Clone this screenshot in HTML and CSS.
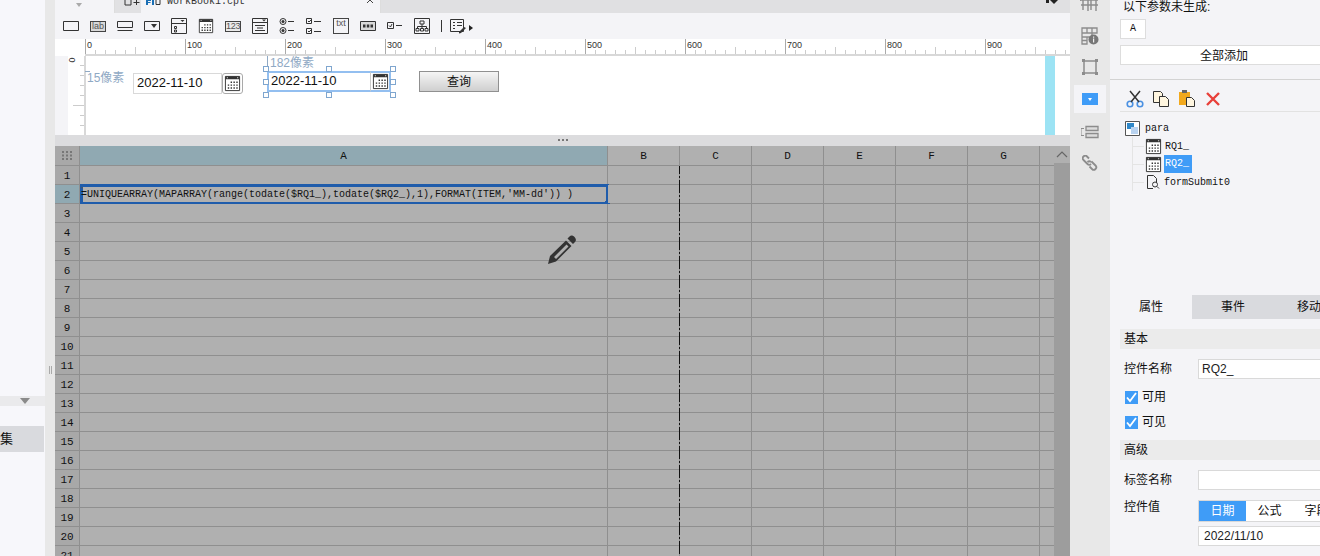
FILE: index.html
```html
<!DOCTYPE html>
<html lang="zh">
<head>
<meta charset="utf-8">
<title>Designer</title>
<link rel="stylesheet" href="styles.css">
</head>
<body>
<div class="app">
  <aside class="left">
    <div class="left-space"></div>
    <div class="left-bar"><span class="left-arrow"></span></div>
    <div class="left-gap"></div>
    <div class="left-item">集</div>
  </aside>
  <div class="divider"><span class="grip"></span></div>
  <main class="center">
    <div class="tabs">
      <div class="tab-lead"><span class="tab-drop"></span></div>
      <div class="tab-add">
        <svg width="16" height="13" viewBox="0 0 16 13"><path d="M1 0v5h6V0M9.500 2.500h6M12.500 0v5" fill="none" stroke="#333"/></svg>
      </div>
      <div class="tab-active">
        <svg width="15" height="13" viewBox="0 0 15 13"><path d="M0 0h5v1H2v1h2.500v1H2v2H0zM6 0h2v5H6z" fill="#1a6fb5"/><path d="M10 0v4.500h4V0" fill="none" stroke="#333"/></svg>
        <span class="tab-name">WorkBook1.cpt</span>
        <svg class="tab-close" width="8" height="4" viewBox="0 0 8 4"><path d="M1 3l3-3 3 3" fill="none" stroke="#444"/></svg>
      </div>
      <div class="tab-rest"><svg class="tab-corner" width="12" height="4" viewBox="0 0 12 4"><path d="M0 0h3v3H0zM4 0h8L8 4z" fill="#222"/></svg></div>
    </div>
    <div class="toolbar">
      <svg class="ti" width="16" height="10" viewBox="0 0 16 10"><path d="M.5.500h15v9H.5z" fill="none" stroke="#333"/></svg>
      <span class="ti ti-box ti-lab">lab</span>
      <svg class="ti" width="16" height="10" viewBox="0 0 16 10"><path d="M.5.500h15v6H.5zM.5 9.500h15" fill="none" stroke="#333"/></svg>
      <svg class="ti" width="16" height="10" viewBox="0 0 16 10"><path d="M.5.500h15v9H.5z" fill="none" stroke="#333"/><path d="M7 3h6l-3 4z" fill="#333"/></svg>
      <svg class="ti" width="16" height="16" viewBox="0 0 16 16"><path d="M.5.500h15v15H.5zM.5 5.500h15" fill="none" stroke="#333"/><path d="M9.500 2h4l-2 2z" fill="#333"/><path d="M3.500 8.500h2v2h-2zM3.500 12h2v2h-2z" fill="none" stroke="#333"/></svg>
      <svg class="ti" width="16" height="16" viewBox="0 0 18 18"><use href="#cal"/></svg>
      <span class="ti ti-box ti-123">123</span>
      <svg class="ti" width="16" height="16" viewBox="0 0 16 16"><path d="M.5.500h15v15H.5zM.5 4.500h15M3 7.500h10M5 10h6M3 12.500h10" fill="none" stroke="#333"/><path d="M10 1.500h4l-2 2z" fill="#333"/></svg>
      <svg class="ti" width="16" height="16" viewBox="0 0 16 16"><g fill="none" stroke="#333"><circle cx="4" cy="3.500" r="3"/><circle cx="4" cy="12.500" r="3"/><path d="M9 3.500h6M9 12.500h6"/></g><circle cx="4" cy="3.500" r="1.500" fill="#333"/><circle cx="4" cy="12.500" r="1.500" fill="#333"/></svg>
      <svg class="ti" width="16" height="16" viewBox="0 0 16 16"><g fill="none" stroke="#333"><path d="M.5.500h5v5h-5zM.5 10.500h5v5h-5zM8 3.500h7M8 13.500h7M2 3l1 1 2-2M2 13l1 1 2-2"/></g></svg>
      <span class="ti ti-box ti-txt">txt</span>
      <svg class="ti" width="16" height="10" viewBox="0 0 16 10"><path d="M.5.500h15v9H.5z" fill="#d9d9d9" stroke="#333"/><path d="M3 3.500h2.500v3H3zM6.800 3.500h2.500v3H6.800zM10.500 3.500H13v3h-2.500z" fill="#333"/></svg>
      <svg class="ti" width="16" height="8" viewBox="0 0 16 8"><path d="M.5.500h6v6h-6zM9 3.500h6M2 3.500l1.500 1.500L5 2" fill="none" stroke="#333"/></svg>
      <svg class="ti" width="16" height="16" viewBox="0 0 16 16"><path d="M.5.500h15v15H.5zM6 3h4v3H6zM8 6v2.500M3.500 8.500h9V10M3.500 8.500V10M8 8.500V10M2 10.500h3V13H2zM6.500 10.500h3V13h-3zM11 10.500h3V13h-3z" fill="none" stroke="#333"/></svg>
      <span class="ti-sep"></span>
      <svg class="ti-last" width="16" height="15" viewBox="0 0 16 15"><path d="M.5.500h13v12H.5zM3 3.500h2M7 3.500h5M3 6.500h2M7 6.500h5M3 9.500h2" fill="none" stroke="#333"/><path d="M9 13l5-5 2 1-5 5-2 .500z" fill="#333"/></svg>
      <span class="ti-more"></span>
    </div>
    <div class="ruler-h">
      <div class="ruler-pad"></div>
      <div class="ruler-scale">
        <span>0</span><span>100</span><span>200</span><span>300</span><span>400</span><span>500</span><span>600</span><span>700</span><span>800</span><span>900</span>
      </div>
    </div>
    <div class="design">
      <div class="design-pad"></div>
      <div class="ruler-v"><span>0</span></div>
      <div class="canvas">
        <span class="guide guide-a">15像素</span>
        <span class="guide guide-b">182像素</span>
        <div class="date date-1"><span class="date-val">2022-11-10</span><span class="date-btn"><svg width="18" height="18" viewBox="0 0 18 18"><use href="#cal"/></svg></span></div>
        <div class="date date-2">
          <span class="date-val">2022-11-10</span><span class="date-btn"><svg width="18" height="18" viewBox="0 0 18 18"><use href="#cal"/></svg></span>
          <i class="h h-tl"></i><i class="h h-tc"></i><i class="h h-tr"></i><i class="h h-ml"></i><i class="h h-mr"></i><i class="h h-bl"></i><i class="h h-bc"></i><i class="h h-br"></i>
        </div>
        <div class="query">查询</div>
        <div class="stripe"></div>
      </div>
    </div>
    <div class="splitter"><svg width="10" height="3" viewBox="0 0 10 3"><path d="M0 0h2v2H0zM4 0h2v2H4zM8 0h2v2H8z" fill="#777"/></svg></div>
    <div class="sheet-wrap">
      <div class="sheet">
        <div class="row row-head">
          <div class="c rh corner"><svg width="11" height="9" viewBox="0 0 11 9"><path d="M0 0h2v2H0zM4 0h2v2H4zM8 0h2v2H8zM0 3.500h2v2H0zM4 3.500h2v2H4zM8 3.500h2v2H8zM0 7h2v2H0zM4 7h2v2H4zM8 7h2v2H8z" fill="#777"/></svg></div>
          <div class="c ca sel">A</div><div class="c cn cb">B</div><div class="c cn">C</div><div class="c cn">D</div><div class="c cn">E</div><div class="c cn">F</div><div class="c cn">G</div><div class="c cz"></div>
        </div>
        <div class="row"><div class="c rh">1</div><div class="c ca"></div><div class="c cn cb"></div><div class="c cn"></div><div class="c cn"></div><div class="c cn"></div><div class="c cn"></div><div class="c cn"></div><div class="c cz"></div></div>
        <div class="row"><div class="c rh sel">2</div><div class="c ca formula"><i class="mark"></i>=UNIQUEARRAY(MAPARRAY(range(todate($RQ1_),todate($RQ2_),1),FORMAT(ITEM,'MM-dd'))  )<i class="fill"></i></div><div class="c cn cb"></div><div class="c cn"></div><div class="c cn"></div><div class="c cn"></div><div class="c cn"></div><div class="c cn"></div><div class="c cz"></div></div>
        <div class="row"><div class="c rh">3</div><div class="c ca"></div><div class="c cn cb"></div><div class="c cn"></div><div class="c cn"></div><div class="c cn"></div><div class="c cn"></div><div class="c cn"></div><div class="c cz"></div></div>
        <div class="row"><div class="c rh">4</div><div class="c ca"></div><div class="c cn cb"></div><div class="c cn"></div><div class="c cn"></div><div class="c cn"></div><div class="c cn"></div><div class="c cn"></div><div class="c cz"></div></div>
        <div class="row"><div class="c rh">5</div><div class="c ca"></div><div class="c cn cb"></div><div class="c cn"></div><div class="c cn"></div><div class="c cn"></div><div class="c cn"></div><div class="c cn"></div><div class="c cz"></div></div>
        <div class="row"><div class="c rh">6</div><div class="c ca"></div><div class="c cn cb"></div><div class="c cn"></div><div class="c cn"></div><div class="c cn"></div><div class="c cn"></div><div class="c cn"></div><div class="c cz"></div></div>
        <div class="row"><div class="c rh">7</div><div class="c ca"></div><div class="c cn cb"></div><div class="c cn"></div><div class="c cn"></div><div class="c cn"></div><div class="c cn"></div><div class="c cn"></div><div class="c cz"></div></div>
        <div class="row"><div class="c rh">8</div><div class="c ca"></div><div class="c cn cb"></div><div class="c cn"></div><div class="c cn"></div><div class="c cn"></div><div class="c cn"></div><div class="c cn"></div><div class="c cz"></div></div>
        <div class="row"><div class="c rh">9</div><div class="c ca"></div><div class="c cn cb"></div><div class="c cn"></div><div class="c cn"></div><div class="c cn"></div><div class="c cn"></div><div class="c cn"></div><div class="c cz"></div></div>
        <div class="row"><div class="c rh">10</div><div class="c ca"></div><div class="c cn cb"></div><div class="c cn"></div><div class="c cn"></div><div class="c cn"></div><div class="c cn"></div><div class="c cn"></div><div class="c cz"></div></div>
        <div class="row"><div class="c rh">11</div><div class="c ca"></div><div class="c cn cb"></div><div class="c cn"></div><div class="c cn"></div><div class="c cn"></div><div class="c cn"></div><div class="c cn"></div><div class="c cz"></div></div>
        <div class="row"><div class="c rh">12</div><div class="c ca"></div><div class="c cn cb"></div><div class="c cn"></div><div class="c cn"></div><div class="c cn"></div><div class="c cn"></div><div class="c cn"></div><div class="c cz"></div></div>
        <div class="row"><div class="c rh">13</div><div class="c ca"></div><div class="c cn cb"></div><div class="c cn"></div><div class="c cn"></div><div class="c cn"></div><div class="c cn"></div><div class="c cn"></div><div class="c cz"></div></div>
        <div class="row"><div class="c rh">14</div><div class="c ca"></div><div class="c cn cb"></div><div class="c cn"></div><div class="c cn"></div><div class="c cn"></div><div class="c cn"></div><div class="c cn"></div><div class="c cz"></div></div>
        <div class="row"><div class="c rh">15</div><div class="c ca"></div><div class="c cn cb"></div><div class="c cn"></div><div class="c cn"></div><div class="c cn"></div><div class="c cn"></div><div class="c cn"></div><div class="c cz"></div></div>
        <div class="row"><div class="c rh">16</div><div class="c ca"></div><div class="c cn cb"></div><div class="c cn"></div><div class="c cn"></div><div class="c cn"></div><div class="c cn"></div><div class="c cn"></div><div class="c cz"></div></div>
        <div class="row"><div class="c rh">17</div><div class="c ca"></div><div class="c cn cb"></div><div class="c cn"></div><div class="c cn"></div><div class="c cn"></div><div class="c cn"></div><div class="c cn"></div><div class="c cz"></div></div>
        <div class="row"><div class="c rh">18</div><div class="c ca"></div><div class="c cn cb"></div><div class="c cn"></div><div class="c cn"></div><div class="c cn"></div><div class="c cn"></div><div class="c cn"></div><div class="c cz"></div></div>
        <div class="row"><div class="c rh">19</div><div class="c ca"></div><div class="c cn cb"></div><div class="c cn"></div><div class="c cn"></div><div class="c cn"></div><div class="c cn"></div><div class="c cn"></div><div class="c cz"></div></div>
        <div class="row"><div class="c rh">20</div><div class="c ca"></div><div class="c cn cb"></div><div class="c cn"></div><div class="c cn"></div><div class="c cn"></div><div class="c cn"></div><div class="c cn"></div><div class="c cz"></div></div>
        <div class="row"><div class="c rh">21</div><div class="c ca"></div><div class="c cn cb"></div><div class="c cn"></div><div class="c cn"></div><div class="c cn"></div><div class="c cn"></div><div class="c cn"></div><div class="c cz"></div></div>
      </div>
      <div class="vscroll"><div class="vscroll-up"><svg width="12" height="7" viewBox="0 0 12 7"><path d="M1 6l5-5 5 5" fill="none" stroke="#666" stroke-width="1.200"/></svg></div></div>
      <svg class="pencil" width="32" height="32" viewBox="0 0 32 32"><path d="M22.500 2.500c1.500-1.500 3.500-1 5 .500s2 3.500.500 5l-2 2-5.500-5.500zM19 6.500l5.500 5.500L9 27.500l-8 2.500 2-8zM19.500 10.500L7 23l2 2 12.500-12.500z" fill="#333" fill-rule="evenodd"/></svg>
    </div>
  </main>
  <nav class="rail">
    <svg class="ri ri-top" width="20" height="12" viewBox="0 0 20 12"><path d="M3 0v10M11 0v10M18 0H0v1M1 5h17M8 0v11M16 0v11" fill="none" stroke="#8c8c8c" stroke-width="1.400"/></svg>
    <svg class="ri" width="18" height="18" viewBox="0 0 18 18"><path d="M1 1h15v5h-5v4H6v7H1zM6 1v5M1 6h10M1 10h5M1 13.500h5M11 1v5" fill="none" stroke="#8c8c8c" stroke-width="1.300"/><circle cx="12.500" cy="12.500" r="5" fill="#777"/><path d="M12 9.500h1.200v1.300H12zM12 11.500h1.200v4H12z" fill="#eee"/></svg>
    <svg class="ri" width="18" height="18" viewBox="0 0 18 18"><path d="M3 3h12v12H3z" fill="none" stroke="#8c8c8c" stroke-width="1.500"/><path d="M1 1h3v3H1zM14 1h3v3h-3zM1 14h3v3H1zM14 14h3v3h-3z" fill="#8c8c8c"/></svg>
    <div class="rail-active"><span class="rail-blue"><span class="rail-tri"></span></span></div>
    <svg class="ri ri-form" width="18" height="14" viewBox="0 0 18 14"><path d="M5 1.500h12v4H5zM5 8.500h12v4H5z" fill="#ddd" stroke="#8c8c8c" stroke-width="1.300"/><path d="M3 3.500H0v7h3" fill="none" stroke="#8c8c8c"/></svg>
    <svg class="ri" width="16" height="16" viewBox="0 0 16 16"><path d="M7 3.500L5 1.500C4 .5 2.500.5 1.500 1.500S.5 4 1.500 5l4 4c1 1 2.500 1 3.500 0M9 7c-1-1-2.500-1-3.500 0M9.500 6.500l4 4c1 1 1 2.500 0 3.500s-2.500 1-3.500 0L7.500 11.500" fill="none" stroke="#8c8c8c" stroke-width="1.800"/></svg>
  </nav>
  <aside class="right">
    <section class="params">
      <div class="params-title">以下参数未生成:</div>
      <div class="param-chip">A</div>
      <div class="add-all">全部添加</div>
    </section>
    <div class="tree-tools">
      <svg width="18" height="18" viewBox="0 0 18 18"><g fill="none" stroke="#4a90e2" stroke-width="1.600"><circle cx="4" cy="14" r="2.800"/><circle cx="14" cy="14" r="2.800"/></g><path d="M4 1l9 11M14 1L5 12" stroke="#333" stroke-width="1.500"/></svg>
      <svg width="18" height="18" viewBox="0 0 18 18"><path d="M1.500 1.500h7l2 2v9h-9z" fill="#fff6e0" stroke="#333"/><path d="M7.500 6.500h6l3 3v7h-9z" fill="#fff6e0" stroke="#333"/></svg>
      <svg width="18" height="18" viewBox="0 0 18 18"><path d="M1 2h11v13H1z" fill="#f2a91d"/><path d="M4 0h5v3H4z" fill="#666"/><path d="M8.500 7.500h5l3 3v6h-8z" fill="#fff6e0" stroke="#333"/></svg>
      <svg width="18" height="18" viewBox="0 0 18 18"><path d="M3 3l12 12M15 3L3 15" stroke="#e8403a" stroke-width="2.400"/></svg>
    </div>
    <div class="tree">
      <div class="node node-root"><svg width="15" height="15" viewBox="0 0 15 15"><path d="M.5.500h14v14H.5z" fill="#fff" stroke="#555"/><path d="M2 2h7v6H2z" fill="#2f87c8"/><path d="M6 6h7v7H6z" fill="#b9d3f0"/></svg><span>para</span></div>
      <div class="branch">
        <div class="node"><svg width="17" height="17" viewBox="0 0 18 18"><use href="#cal"/></svg><span>RQ1_</span></div>
        <div class="node"><svg width="17" height="17" viewBox="0 0 18 18"><use href="#cal"/></svg><span class="picked">RQ2_</span></div>
        <div class="node node-form"><svg width="13" height="14" viewBox="0 0 13 14"><path d="M6 13.500H.5V.5h6l3 3v4" fill="none" stroke="#333"/><circle cx="8" cy="9.500" r="2.500" fill="none" stroke="#333"/><path d="M10 11.500l2 2" stroke="#333"/></svg><span>formSubmit0</span></div>
      </div>
    </div>
    <div class="prop-tabs"><div class="pt pt-on">属性</div><div class="pt">事件</div><div class="pt pt-last">移动</div></div>
    <div class="props">
      <div class="group">基本</div>
      <div class="field field-name"><label class="lab">控件名称</label><div class="input input-name">RQ2_</div></div>
      <div class="check"><span class="box"><svg width="13" height="13" viewBox="0 0 13 13"><path d="M2 6.500l3 3.500 6-8" fill="none" stroke="#fff" stroke-width="1.800"/></svg></span>可用</div>
      <div class="check"><span class="box"><svg width="13" height="13" viewBox="0 0 13 13"><path d="M2 6.500l3 3.500 6-8" fill="none" stroke="#fff" stroke-width="1.800"/></svg></span>可见</div>
      <div class="group group-2">高级</div>
      <div class="field field-label"><label class="lab">标签名称</label><div class="input"></div></div>
      <div class="field field-value">
        <label class="lab lab-top">控件值</label>
        <div class="value-col">
          <div class="seg"><span class="seg-on">日期</span><span>公式</span><span>字段</span></div>
          <div class="input input-date">2022/11/10</div>
        </div>
      </div>
    </div>
  </aside>
</div>
<svg class="defs" width="0" height="0">
  <defs>
    <g id="cal"><path d="M1.500 1.500h15v15h-15z" fill="#fff" stroke="#333"/><path d="M1.500 1.500h15v3h-15z" fill="#333"/><path d="M3 2.500h1v1H3zM14 2.500h1v1h-1z" fill="#fff"/><path d="M7 7h1.500v1.500H7zM10 7h1.500v1.500H10zM13 7h1.500v1.500H13zM4 10h1.500v1.500H4zM7 10h1.500v1.500H7zM10 10h1.500v1.500H10zM13 10h1.500v1.500H13zM4 13h1.500v1.500H4zM7 13h1.500v1.500H7zM10 13h1.500v1.500H10zM13 13h1.500v1.500H13z" fill="#333"/></g>
  </defs>
</svg>
</body>
</html>
```
FILE: styles.css
```css
* { box-sizing: border-box; }
html, body { margin: 0; padding: 0; height: 556px; overflow: hidden; }
body { font-family: "Liberation Sans", "Noto Sans CJK SC", sans-serif; font-size: 12px; color: #111; background: #f5f5f7; }
.defs { position: absolute; }
.app { display: grid; grid-template-columns: 45px 10px 1015px 40px 210px; height: 556px; overflow: hidden; }

/* left panel */
.left { background: #f7f7fb; display: flex; flex-direction: column; overflow: hidden; }
.left-space { height: 396px; }
.left-bar { height: 10px; background: #eaeaec; display: flex; justify-content: flex-end; align-items: center; padding-right: 15px; }
.left-arrow { width: 0; height: 0; border: 5px solid transparent; border-top: 6px solid #8a8a8a; border-bottom: 0; }
.left-gap { height: 20px; }
.left-item { height: 26px; width: 44px; background: #d9dade; font-size: 13px; line-height: 26px; padding-right: 32px; text-align: right; white-space: nowrap; }
.divider { background: #e8e8e8; display: flex; justify-content: center; padding-top: 366px; }
.grip { width: 3px; height: 8px; border-left: 1px solid #aaa; border-right: 1px solid #aaa; }

/* center */
.center { display: flex; flex-direction: column; position: relative; overflow: hidden; background: #f4f4f7; }
.tabs { display: flex; height: 13px; overflow: hidden; background: #f4f4f7; }
.tab-lead { width: 60px; padding: 3px 0 0 21px; position: relative; border-right: 1px solid #ddd; }
.tab-drop { display: block; width: 0; height: 0; border: 3px solid transparent; border-top: 4px solid #aaa; border-bottom: 0; }
.tab-add { width: 26px; background: #e1e1e3; padding-left: 9px; }
.tab-add svg { display: block; }
.tab-active { width: 240px; background: #f4f4f7; border-right: 1px solid #ddd; display: flex; padding-left: 5px; position: relative; }
.tab-active svg { flex: none; }
.tab-name { font-family: "Liberation Mono", monospace; font-size: 10px; line-height: 4px; margin-left: 6px; color: #333; height: 13px; }
.tab-active .tab-close { position: absolute; left: 225px; top: 0; }
.tab-rest { flex: 1; background: #e0e0e2; display: flex; justify-content: flex-end; padding-right: 12px; }
.tab-corner { flex: none; }
.toolbar { height: 26px; display: flex; align-items: center; padding-left: 8px; background: #f4f4f7; }
.ti { flex: none; margin-right: 11px; width: 16px; }
.ti-box { height: 11px; border: 1px solid #444; background: #d9d9d9; font-size: 9px; line-height: 9px; text-align: center; color: #555; overflow: hidden; }
.ti-123 { font-size: 9px; background: #eaeaea; letter-spacing: -.2px; }
.ti-txt { height: 16px; background: #f4f4f7; font-size: 9px; line-height: 8px; }
.ti-sep { width: 1px; height: 12px; background: #333; margin: 0 8px 0 0; flex: none; }
.ti-last { flex: none; margin-right: 3px; }
.ti-more { width: 0; height: 0; border: 3px solid transparent; border-left: 4px solid #222; border-right: 0; margin-top: 4px; }
.ruler-h { height: 17px; display: flex; background: #fff; }
.ruler-pad { width: 30px; flex: none; background: #fff; }
.ruler-scale { flex: 1; display: flex; border-bottom: 2px solid #d8d8d8;
  background-image:
    repeating-linear-gradient(90deg, #aaa 0 1px, transparent 1px 100px),
    repeating-linear-gradient(90deg, #ccc 0 1px, transparent 1px 50px),
    repeating-linear-gradient(90deg, #ccc 0 1px, transparent 1px 10px);
  background-size: 100% 15px, 100% 7px, 100% 4px;
  background-position: 0 bottom, 0 bottom, 0 bottom;
  background-repeat: no-repeat;
}
.ruler-scale span { width: 100px; flex: none; font-size: 9px; line-height: 10px; padding: 1px 0 0 2px; color: #333; }
.design { height: 79px; display: flex; background: #fff; }
.design-pad { width: 13px; background: #f4f4f7; flex: none; }
.ruler-v { width: 18px; flex: none; position: relative; border-right: 2px solid #d8d8d8;
  background-image:
    repeating-linear-gradient(180deg, transparent 0 49px, #ccc 49px 50px),
    repeating-linear-gradient(180deg, transparent 0 9px, #ccc 9px 10px);
  background-size: 11px 100%, 4px 100%;
  background-position: right top, right top;
  background-repeat: no-repeat;
}
.ruler-v span { position: absolute; left: 1px; top: -1px; font-size: 9px; line-height: 10px; transform: rotate(90deg); color: #333; }
.canvas { flex: 1; position: relative; background: #fff; }
.guide { position: absolute; font-size: 12px; line-height: 14px; color: #8fa9c4; white-space: nowrap; }
.guide-a { left: 1px; top: 15px; }
.guide-a::before { content: ""; position: absolute; left: -2px; top: 0; width: 5px; height: 4px; border-top: 1px solid #8fa9c4; }
.guide-b { left: 181px; top: 0; border-left: 1px solid #8fa9c4; padding-left: 2px; }
.date { position: absolute; display: flex; }
.date-1 { left: 47px; top: 17px; }
.date-2 { left: 181px; top: 15px; }
.date-val { width: 89px; height: 21px; border: 1px solid #d9d9d9; background: #fff; font-size: 13px; line-height: 17px; padding-left: 3px; color: #111; }
.date-2 .date-val { width: 103px; height: 21px; border: 2px solid #93bff0; border-right: 0; line-height: 15px; padding-left: 2px; }
.date-btn { width: 21px; height: 21px; border: 1px solid #aaa; border-radius: 3px; display: flex; align-items: center; justify-content: center; background: #fff; }
.date-2 .date-btn { width: 21px; border: 2px solid #93bff0; border-left: 1px solid #ccc; border-radius: 0; }
.date-btn svg { width: 17px; height: 17px; flex: none; }
.h { position: absolute; width: 6px; height: 6px; border: 1px solid #7fa6cf; background: #fff; }
.h-tl { left: -4px; top: -5px; } .h-tc { left: 59px; top: -5px; } .h-tr { left: 123px; top: -5px; }
.h-ml { left: -4px; top: 8px; } .h-mr { left: 123px; top: 8px; }
.h-bl { left: -4px; top: 21px; } .h-bc { left: 59px; top: 21px; } .h-br { left: 123px; top: 21px; }
.query { position: absolute; left: 333px; top: 15px; width: 80px; height: 21px; border: 1px solid #909090; background: linear-gradient(#f5f5f5, #cfcfcf); text-align: center; font-size: 12px; line-height: 21px; }
.stripe { position: absolute; left: 959px; top: 0; bottom: 0; width: 10px; background: #9ce3f4; }
.splitter { height: 11px; background: #dcdcde; display: flex; justify-content: center; align-items: center; }
.sheet-wrap { flex: 1; display: flex; position: relative; overflow: hidden; background: #b0b0b0; }
.sheet { width: 999px; flex: none; }
.row { display: flex; height: 19px; border-bottom: 1px solid #8f8f8f; }
.row-head { height: 20px; }
.c { flex: none; height: 18px; border-right: 1px solid #8f8f8f; text-align: center; font-family: "Liberation Mono", monospace; font-size: 10px; line-height: 20px; color: #111; background: #b0b0b0; }
.row-head .c { height: 19px; line-height: 21px; font-size: 11px; }
.rh { width: 25px; background: #a8a8a8; font-size: 11px; }
.corner { display: flex; align-items: center; justify-content: center; }
.ca { width: 528px; position: relative; }
.cn { width: 72px; }
.cz { flex: 1; border-right: 0; }
.cb { position: relative; }
.cb::after { content: ""; position: absolute; right: -1px; top: 0; height: 19px; width: 1px; background: repeating-linear-gradient(#111 0 8px, transparent 8px 10px, #111 10px 12px, transparent 12px 14px); }
.row-head .cb::after { display: none; }
.sel { background: #90a9b2; }
.formula { text-align: left; padding-left: 1px; white-space: nowrap; line-height: 19px; color: #111; z-index: 0; }
.formula::before { content: ""; position: absolute; left: 0; right: -2px; top: -1px; bottom: -2px; border: 3px solid #1f5cab; z-index: -1; }
.fill { position: absolute; right: -3px; bottom: -3px; width: 5px; height: 5px; background: #1f5cab; z-index: 1; }
.mark { position: absolute; left: 1px; top: 2px; width: 0; height: 0; border: 1.500px solid transparent; border-top: 2px solid #555; border-bottom: 0; }
.vscroll { flex: 1; display: flex; flex-direction: column; background: #9d9d9d; }
.vscroll-up { height: 17px; background: #b0b0b0; display: flex; align-items: center; justify-content: center; }
.pencil { position: absolute; left: 492px; top: 88px; }

/* right rail */
.rail { background: #e8e8e8; display: flex; flex-direction: column; align-items: center; position: relative; }
.ri { flex: none; margin-bottom: 13px; }
.ri-top { margin-bottom: 15px; }
.rail-active { width: 32px; height: 28px; background: #f4f4f7; display: flex; align-items: center; justify-content: center; margin: -4px 0 12px; }
.rail-blue { width: 16px; height: 12px; background: #3f9cf7; display: flex; align-items: center; justify-content: center; }
.rail-tri { width: 0; height: 0; border: 2px solid transparent; border-width: 3px 2.500px 0; border-top-color: #fff; }
.ri-form { margin-bottom: 16px; }

/* right panel */
.right { background: #f4f4f7; display: flex; flex-direction: column; overflow: hidden; }
.params { height: 80px; border-bottom: 1px solid #d3d3d3; padding-left: 10px; overflow: hidden; flex: none; }
.params-title { font-size: 12px; line-height: 14px; padding-left: 3px; }
.param-chip { width: 26px; height: 20px; margin-top: 5px; background: #fff; border: 1px solid #ddd; font-family: "Liberation Mono", monospace; font-size: 10px; line-height: 18px; text-align: center; }
.add-all { width: 220px; height: 20px; margin-top: 6px; background: #fff; border: 1px solid #ddd; font-size: 12px; line-height: 20px; text-align: center; padding-right: 12px; }
.tree-tools { height: 32px; margin-left: 10px; border-bottom: 1px solid #e2e2e2; display: flex; align-items: center; gap: 8px; padding: 6px 0 0 6px; flex: none; }
.tree { padding: 9px 0 0 15px; height: 183px; flex: none; }
.node { display: flex; align-items: center; height: 18px; font-family: "Liberation Mono", monospace; font-size: 10px; gap: 3px; color: #111; }
.node-root { gap: 5px; height: 15px; margin-bottom: 1px; }
.branch { margin-left: 7px; border-left: 1px solid #e4e4e4; }
.branch .node { padding-left: 12px; background: linear-gradient(#e4e4e4, #e4e4e4) no-repeat left center / 11px 1px; }
.branch .node-form { padding-left: 14px; gap: 4px; }
.picked { background: #3f9cf7; color: #fff; padding: 0 1px; line-height: 18px; height: 18px; margin-left: -1px; width: 28px; }
.prop-tabs { display: flex; height: 24px; background: #d9dade; font-size: 12px; line-height: 25px; text-align: center; flex: none; }
.pt { width: 82px; flex: none; }
.pt-on { background: #f4f4f7; }
.pt-last { width: 70px; }
.props { flex: 1; padding: 10px 0 0 10px; }
.group { height: 20px; width: 210px; background: #ebebeb; font-size: 12px; line-height: 20px; padding-left: 4px; }
.group-2 { margin-top: 11px; }
.field { display: flex; align-items: center; padding-left: 4px; }
.field-name { margin-top: 10px; height: 20px; }
.field-label { margin-top: 10px; height: 20px; }
.field-value { margin-top: 10px; align-items: flex-start; }
.lab { width: 74px; flex: none; font-size: 12px; line-height: 21px; }
.lab-top { line-height: 15px; }
.input { width: 130px; height: 20px; flex: none; border: 1px solid #d9d9d9; background: #fff; font-size: 12px; line-height: 18px; padding-left: 3px; color: #222; }
.input-date { padding-left: 5px; }
.check { display: flex; align-items: center; gap: 4px; height: 13px; margin: 12px 0 0 5px; font-size: 12px; line-height: 13px; }
.box { width: 13px; height: 13px; background: #3f9cf7; display: block; flex: none; }
.box svg { display: block; }
.value-col { display: flex; flex-direction: column; gap: 4px; }
.seg { display: flex; height: 22px; width: 130px; border: 1px solid #d9d9d9; background: #fff; font-size: 12px; line-height: 20px; overflow: hidden; flex: none; }
.seg span { width: 47px; flex: none; text-align: center; }
.seg .seg-on { background: #3f9cf7; color: #fff; }
```
